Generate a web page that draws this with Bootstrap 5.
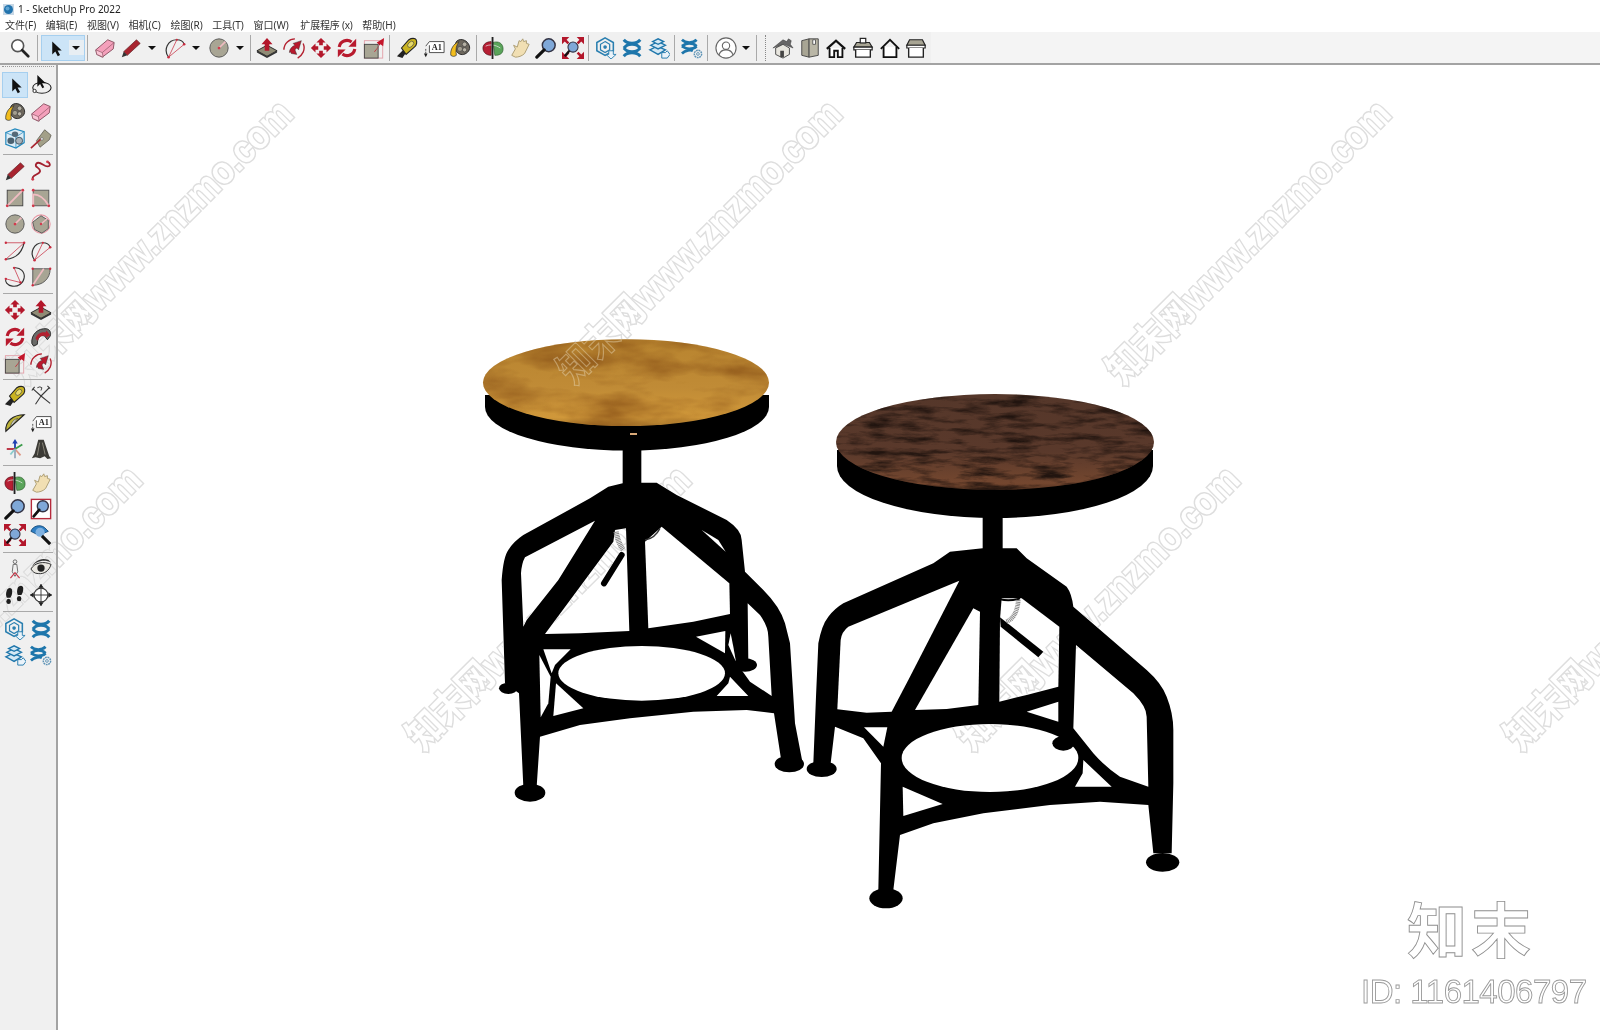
<!doctype html>
<html lang="zh">
<head>
<meta charset="utf-8">
<title>1 - SketchUp Pro 2022</title>
<link href="https://cdn.jsdelivr.net/npm/bootstrap@5.3.0/dist/css/bootstrap.min.css" rel="stylesheet">
<style>
html,body{height:1030px;overflow:hidden;background:#fff}
body{font-family:"Noto Sans","Noto Sans CJK SC",sans-serif;color:#222}
.su-app{height:1030px;position:relative}
.su-title{height:18px;font-size:10px;padding-left:3px;gap:4px;line-height:18px}
.su-logo{width:11px;height:11px;background:#c8d8e6}
.su-menu{height:14px;font-size:10px;line-height:14px;padding-left:5px;gap:9.6px;color:#333}
.su-menu span{white-space:nowrap}
.su-menu .su-m-wide{margin-left:2px;letter-spacing:-.2px}
.su-bar{height:33px;background:#f4f4f4;border-bottom:2px solid #a3a3a3}
.su-strip{height:31px;width:931px;background:#f0f0f0;padding-left:7px}
.su-i{width:26.7px;height:26px;flex:none;display:flex;align-items:center;justify-content:center}
.su-i svg{width:22px;height:22px;display:block}
.su-caret{width:14px;height:26px;flex:none;display:flex;align-items:center;justify-content:center}
.su-caret::after{content:"";border-style:solid;border-width:4.5px 4.5px 0;border-color:#111 transparent transparent}
.su-caret-gap{margin-right:3.3px}
.su-sel{width:44.3px;height:26px;background:#cce4f7;border:1px solid #a6cfef;flex:none;display:flex;align-items:center}
.su-sel .su-i{width:27px}
.su-sel .su-caret{width:15px;height:15px;background:#e8eef3}
.su-v{width:1px;height:26px;background:#a9a9a9;flex:none;margin:0 3.7px 0 1.4px}
.su-v-a{margin-left:3px;margin-right:3.3px}
.su-v-b{margin-left:1.2px;margin-right:4px}
.su-v-c{margin-left:3.3px;margin-right:3px}
.su-v-d{margin-left:2px;margin-right:3px}
.su-v-e{margin-left:1.6px;margin-right:4.7px}
.su-v-f{margin-left:2.2px;margin-right:8px}
.su-grip{width:1px;height:26px;flex:none;margin-right:4px;border-left:1px dotted #888}
.su-side{width:58px;flex:none;background:#f0f0f0;border-right:2px solid #a3a3a3;padding:1px 0 0 2px}
.su-grip-h{height:1px;width:52px;border-top:1px dotted #999;margin-bottom:5px}
.su-grid{display:grid;grid-template-columns:26px 26px;grid-auto-rows:26.4px}
.su-grid .su-i{width:26px;height:26.4px}
.su-grid .su-i.su-on{background:#cce4f7;outline:1px solid #a6cfef;outline-offset:-1px}
.su-h{height:7px;width:50px;margin-left:1px;display:flex;align-items:center}
.su-h::after{content:"";display:block;height:1px;width:100%;background:#a9a9a9}
.su-canvas{flex:1 1 auto;min-width:0;background:#fff}
.su-canvas svg{display:block}
.su-wm{position:absolute;left:0;top:0;pointer-events:none;mix-blend-mode:darken}
.su-wmt{font-family:"Liberation Sans","Noto Sans CJK SC",sans-serif;font-weight:700;font-size:39px;fill:#fff;stroke:#dedede;stroke-width:3px;paint-order:stroke}
.su-wmt-s{font-family:"Liberation Sans","Noto Sans CJK SC",sans-serif;font-weight:700;font-size:39px;fill:none;stroke:#e9d9b8;stroke-opacity:.45;stroke-width:1.2px}
.su-brand{font-family:"Noto Sans CJK SC",sans-serif;font-weight:700;font-size:60px;fill:#fff;stroke:#8f8f8f;stroke-width:.9px}
.su-id{font-family:"Liberation Sans",sans-serif;font-size:33px;fill:#fff;stroke:#9a9a9a;stroke-width:.9px}
</style>
</head>
<body>
<svg width="0" height="0" class="position-absolute">
<defs>
<symbol id="i-find" viewBox="0 0 24 24"><circle cx="9.5" cy="9.5" r="6.5" fill="#fff" stroke="#555" stroke-width="1.8"/><path d="M14.5 14.5 21 21" stroke="#222" stroke-width="3" stroke-linecap="round"/></symbol>
<symbol id="i-arrow" viewBox="0 0 24 24"><path d="M9 5v14l3.300-3.300 2.700 5.300 2.500-1.300-2.700-5h4.500z" fill="#111"/></symbol>
<symbol id="i-orbit" viewBox="0 0 24 24"><ellipse cx="13" cy="15" rx="10" ry="6" fill="none" stroke="#222" stroke-width="1.200"/><circle cx="5" cy="18.500" r="1.800" fill="#fff" stroke="#222"/><path d="M8 1v13l3-3 2.500 4.500 2-1-2.300-4.300h4z" fill="#111"/></symbol>
<symbol id="i-paint" viewBox="0 0 24 24"><path d="M9 4c5-3 11 0 13 5s-2 9-6 10-8-2-9-6 0-7 2-9z" fill="#6d675d" stroke="#222"/><circle cx="17" cy="8" r="2.500" fill="#b5b0a3" stroke="#333" stroke-width=".6"/><circle cx="12" cy="13" r="2.800" fill="#a39e8f" stroke="#333" stroke-width=".6"/><circle cx="17" cy="14" r="2.300" fill="#bab5a8" stroke="#333" stroke-width=".6"/><path d="M2 20c-1-6 3-13 9-15-3 4-4 8-3 15-2 1.500-4 1.500-6 0z" fill="#f2bd1d" stroke="#333" stroke-width=".8"/></symbol>
<symbol id="i-eraser" viewBox="0 0 24 24"><path d="M2 14 15 3l7 3-1 7L9 22l-6-3z" fill="#f4a0bb" stroke="#87505f"/><path d="M3 19l-1-5 7 3 1 5zM9 17 22 6" fill="#fbc6d6" stroke="#87505f" stroke-width=".7"/></symbol>
<symbol id="i-comp" viewBox="0 0 24 24"><path d="M2 6l10-4 10 3v12l-9 6-11-4z" fill="#dcecf6" stroke="#2489bd" stroke-width="1.300"/><path d="M2 6l11 5 9-6M13 11v12" fill="none" stroke="#2489bd" stroke-width=".8"/><ellipse cx="12" cy="8" rx="3.500" ry="3" fill="#566a78"/><ellipse cx="7.500" cy="15" rx="3.800" ry="3.500" fill="#4a6170"/><ellipse cx="16.500" cy="15" rx="3.800" ry="3.800" fill="#aab2b8" stroke="#40525e"/></symbol>
<symbol id="i-tag" viewBox="0 0 24 24"><path d="M7 15 16 3l7 6-2 5-10 8z" fill="#a3a088" stroke="#55544a" stroke-width=".8"/><path d="M1 23 12 13" stroke="#a8242f" stroke-width="1.800"/><circle cx="13" cy="13" r="1.500" fill="#eee" stroke="#555" stroke-width=".6"/></symbol>
<symbol id="i-pencil" viewBox="0 0 24 24"><path d="M4 16 18 3l4 4L8 20z" fill="#a8242f" stroke="#5a1a20" stroke-width=".7"/><path d="M4 16l-2 6 6-2z" fill="#333"/></symbol>
<symbol id="i-free" viewBox="0 0 24 24"><path d="M3 21c-2-5 8-5 8-9S4 8 7 4s8 3 12 3 3-4 0-5" fill="none" stroke="#a21f2d" stroke-width="2"/><circle cx="3" cy="21" r="1.500" fill="#d23a4c"/><circle cx="19" cy="2" r="1.500" fill="#d23a4c"/></symbol>
<symbol id="i-rect" viewBox="0 0 24 24"><rect x="3.500" y="3.500" width="17" height="17" fill="#a8a594" stroke="#444"/><path d="M3.500 20.500 20.500 3.500" stroke="#f0bcc2" stroke-width="2"/><circle cx="3.500" cy="20.500" r="1.500" fill="#d23a4c"/><circle cx="20.500" cy="3.500" r="1.500" fill="#d23a4c"/></symbol>
<symbol id="i-rrect" viewBox="0 0 24 24"><rect x="3.500" y="3.500" width="17" height="17" fill="#a8a594" stroke="#555"/><path d="M3.500 20.500V8q10 0 17 12.500" fill="none" stroke="#f0bcc2" stroke-width="2"/><g fill="#d23a4c"><circle cx="3.500" cy="3.500" r="1.500"/><circle cx="3.500" cy="20.500" r="1.500"/><circle cx="20.500" cy="20.500" r="1.500"/></g></symbol>
<symbol id="i-circle" viewBox="0 0 24 24"><circle cx="12" cy="12" r="10" fill="#a8a594" stroke="#555"/><path d="M12 12 19 5" stroke="#f0bcc2" stroke-width="1.800"/><circle cx="12" cy="12" r="1.500" fill="#d23a4c"/></symbol>
<symbol id="i-poly" viewBox="0 0 24 24"><circle cx="12" cy="12" r="10" fill="none" stroke="#e89aa5" stroke-width="1.200"/><path d="M12 3l8 5 0 9-7 5-8-4-2-8z" fill="#a8a594" stroke="#555"/><path d="M12 12 19 6" stroke="#f0bcc2" stroke-width="1.600"/><circle cx="12" cy="12" r="1.300" fill="#d23a4c"/></symbol>
<symbol id="i-arc1" viewBox="0 0 24 24"><path d="M2 21Q18 20 22 3" fill="none" stroke="#333" stroke-width="1.200"/><path d="M2 21 22 3M2 3h20" fill="none" stroke="#cf5363" stroke-width="1"/><g fill="#c92c40"><circle cx="2" cy="3" r="1.300"/><circle cx="22" cy="3" r="1.300"/><circle cx="2" cy="21" r="1.300"/></g></symbol>
<symbol id="i-arc2" viewBox="0 0 24 24"><path d="M5 22C-1 14 4 3 14 3c4 0 7 2 8 5" fill="none" stroke="#333" stroke-width="1.300"/><path d="M5 22 22 8M5 22 14 3" fill="none" stroke="#cf5363"/><g fill="#c92c40"><circle cx="5" cy="22" r="1.400"/><circle cx="22" cy="8" r="1.400"/><circle cx="14" cy="3" r="1.200"/></g></symbol>
<symbol id="i-arc3" viewBox="0 0 24 24"><path d="M11 2C18 1 23 7 22 13S15 23 9 22 1 17 2 14" fill="none" stroke="#333" stroke-width="1.200"/><path d="M11 2 18 18 2 14" fill="none" stroke="#cf5363"/><g fill="#c92c40"><circle cx="11" cy="2" r="1.300"/><circle cx="18" cy="18" r="1.300"/><circle cx="2" cy="14" r="1.300"/></g></symbol>
<symbol id="i-pie" viewBox="0 0 24 24"><path d="M3 3h19C22 14 14 21 3 21z" fill="#a8a594" stroke="#555"/><path d="M3 21 15 3" stroke="#f0bcc2" stroke-width="1.800"/><g fill="#c92c40"><circle cx="3" cy="3" r="1.300"/><circle cx="22" cy="3" r="1.300"/><circle cx="3" cy="21" r="1.300"/></g></symbol>
<symbol id="i-move" viewBox="0 0 24 24"><g fill="#b3172b"><path d="M12 1l5 5h-3v3h-4V6H7z"/><path d="M12 23l-5-5h3v-3h4v3h3z"/><path d="M1 12l5-5v3h3v4H6v3z"/><path d="M23 12l-5 5v-3h-3v-4h3V7z"/></g></symbol>
<symbol id="i-push" viewBox="0 0 24 24"><path d="M1 15 12 9l11 6-11 6z" fill="#8f8b75" stroke="#222"/><path d="M1 15v2l11 6 11-6v-2l-11 6z" fill="#333"/><path d="M12 1l6 7h-3.500v7h-5V8H6z" fill="#b3172b"/></symbol>
<symbol id="i-rotate" viewBox="0 0 24 24"><g fill="none" stroke="#b81a2e" stroke-width="3.400"><path d="M3.500 11A8.500 8.500 0 0 1 17 5.500"/><path d="M20.500 13A8.500 8.500 0 0 1 7 18.500"/></g><path d="M22 2v8.500h-8.500zM2 22v-8.500h8.500z" fill="#b81a2e"/></symbol>
<symbol id="i-follow" viewBox="0 0 24 24"><path d="M2 19C1 9 9 2 18 3c4 1 5 4 4 8l-3 4-3-4c-5-2-8 2-8 9l-4 2z" fill="#6a6a68" stroke="#1e1e1e"/><path d="M6 14c1-5 6-8 11-7l1-2 4 5-5 3 .5-2c-5-1-8 1-9 5z" fill="#b3202f"/></symbol>
<symbol id="i-scale" viewBox="0 0 24 24"><rect x="1.500" y="4" width="20" height="19" fill="none" stroke="#e3a0a9"/><rect x="1.500" y="8" width="15" height="15" fill="#a8a594" stroke="#444"/><path d="M12 16 18 9 15 6l8-5-1 9-3-2-6 8z" fill="#c4152a"/></symbol>
<symbol id="i-offset" viewBox="0 0 24 24"><g fill="none" stroke="#b3202f" stroke-width="1.500"><path d="M1 14C1 7 7 2 13 2"/><path d="M22 7c3 7-1 13-6 16"/></g><path d="M7 17c0-4 3-7 6-8l-2-2 9-3-3 10-2-2-2 2 2 5-6-1-1-2z" fill="#b81a2e" stroke="#2c2c2c" stroke-width=".5"/></symbol>
<symbol id="i-tape" viewBox="0 0 24 24"><path d="M1 21 8 14l3 3-4 6z" fill="#222"/><path d="M6 12 14 3c3-2 7-2 8 0s1 6-2 8l-9 8z" fill="#c9b320" stroke="#222" stroke-width="1.200"/><ellipse cx="16" cy="8" rx="2.500" ry="4" transform="rotate(45 16 8)" fill="#e7da6a" stroke="#333" stroke-width=".6"/></symbol>
<symbol id="i-tools" viewBox="0 0 24 24"><g stroke="#3a3a3a" stroke-width="1.200" fill="none"><path d="M3 4 12 12M22 20 12 12M12 12l-6 9M12 12l9-9"/><path d="M5 2l-3 4M19 1l3 3"/></g><path d="M8 3q3-2 5 0l-1 3" fill="none" stroke="#333"/></symbol>
<symbol id="i-proto" viewBox="0 0 24 24"><path d="M2 21C1 10 10 3 22 3z" fill="#bdb33a" stroke="#222" stroke-width="1.200"/><path d="M7 16C8 11 11 8 15 7z" fill="#eee" stroke="#333" stroke-width=".6"/></symbol>
<symbol id="i-text" viewBox="0 0 24 24"><path d="M3 13v7" stroke="#444" stroke-dasharray="2 1"/><path d="M1 18h4l-2 4z" fill="#222"/><path d="M3 10 7 5h16v12H7V9" fill="#fff" stroke="#444"/><text x="15" y="14" text-anchor="middle" font-family="Liberation Serif,serif" font-weight="700" font-size="9" fill="#222">A1</text></symbol>
<symbol id="i-axes" viewBox="0 0 24 24"><path d="M12 12V5" stroke="#1f3fb0" stroke-width="2"/><path d="M12 1l3 5H9z" fill="#1f3fb0"/><path d="M12 12l8-5" stroke="#3b9b4a" stroke-width="2"/><path d="M12 12H3" stroke="#b8283a" stroke-width="2"/><path d="M12 12l6 7" stroke="#d98" stroke-width="2"/><path d="M12 12l-5 6" stroke="#8cc" stroke-width="2"/><path d="M12 12v10" stroke="#9ab" stroke-width="2"/></symbol>
<symbol id="i-3d" viewBox="0 0 24 24"><path d="M9 2h6l6 18 2 2-4 1-3-3-5 2-5-1-4 1 3-5z" fill="#3c3b36"/><path d="M10.500 5 8 19M13.500 5l3 13" stroke="#8e8b7e"/></symbol>
<symbol id="i-orb" viewBox="0 0 24 24"><path d="M12 6c6-2 11 1 11 7s-5 7-9 7z" fill="#5aa45a" stroke="#2a5a2a" stroke-width=".7"/><path d="M1 12c0-4 4-7 9-7v15c-5 0-9-3-9-8z" fill="#b61f33" stroke="#4a1016" stroke-width=".7"/><path d="M4 10c4-2 10-2 16 2" fill="none" stroke="#e8e8e8" stroke-width=".8"/><path d="M11.500 0v24" stroke="#222" stroke-width="2"/></symbol>
<symbol id="i-hand" viewBox="0 0 24 24"><path d="M3 20 7 13 5 9l4 2 2-7 2 1 2-3 1 3 3-1 0 3 3 1-5 10c-3 3-7 4-10 4z" fill="#f1dfb3" stroke="#aa9a70"/></symbol>
<symbol id="i-zoom" viewBox="0 0 24 24"><circle cx="15" cy="9" r="7" fill="#7fa8d8" stroke="#334" stroke-width="1.600"/><path d="M10 14 2 22" stroke="#111" stroke-width="3.400" stroke-linecap="round"/></symbol>
<symbol id="i-zoomw" viewBox="0 0 24 24"><rect x="1.500" y="1.500" width="21" height="21" fill="#fff" stroke="#b62a3c" stroke-width="1.500"/><circle cx="14" cy="9" r="6" fill="#7fa8d8" stroke="#334" stroke-width="1.500"/><path d="M10 13 4 20" stroke="#111" stroke-width="3" stroke-linecap="round"/></symbol>
<symbol id="i-zoomx" viewBox="0 0 24 24"><g fill="#b3172b"><path d="M0 0h8L5 3l3 3-2 2-3-3-3 3z"/><path d="M24 0v8l-3-3-3 3-2-2 3-3-3-3z"/><path d="M24 24h-8l3-3-3-3 2-2 3 3 3-3z"/><path d="M0 24v-8l3 3 3-3 2 2-3 3 3 3z"/></g><circle cx="12" cy="11" r="5.500" fill="#7fa8d8" stroke="#334" stroke-width="1.200"/><path d="M8 15 3 21" stroke="#111" stroke-width="2.400"/></symbol>
<symbol id="i-prev" viewBox="0 0 24 24"><path d="M1 8c2-6 10-8 15-4l4 4-5 2-2-2c-3-1-5 0-6 3z" fill="#2f7fc4" stroke="#174d7c"/><circle cx="11" cy="9" r="5" fill="#7fb1e0"/><path d="M13 13l9 9" stroke="#111" stroke-width="3.400"/></symbol>
<symbol id="i-walk" viewBox="0 0 24 24"><circle cx="12" cy="4" r="2" fill="none" stroke="#666"/><path d="M10 7h4l1 8-3 5-3-5z" fill="none" stroke="#666"/><path d="M7 22l5-6 5 6" fill="none" stroke="#c8394a" stroke-width="1.300"/></symbol>
<symbol id="i-eye" viewBox="0 0 24 24"><path d="M1 12C5 5 15 3 23 7c-2 7-8 11-14 10-4 0-6-2-8-5z" fill="#eae8e2" stroke="#222"/><circle cx="12" cy="11" r="4" fill="#222"/><path d="M1 11C6 3 16 1 23 5l-3-3C12-1 5 3 1 11z" fill="#333"/></symbol>
<symbol id="i-feet" viewBox="0 0 24 24"><g fill="#1e1e1e"><path d="M3 7c2-4 6-3 6 1s-1 5-2 7H3c-1-3-1-5 0-8z"/><ellipse cx="5" cy="19" rx="2.500" ry="2.800"/><path d="M15 4c2-3 6-3 6 1s-1 5-2 7h-4c-1-3-1-5 0-8z"/><ellipse cx="16.500" cy="16" rx="2.500" ry="2.800"/></g></symbol>
<symbol id="i-pos" viewBox="0 0 24 24"><circle cx="12" cy="12" r="7.500" fill="#fff" stroke="#333" stroke-width="1.200"/><path d="M12 0v24M0 12h24" stroke="#333"/><path d="M12 0l3 4H9zM12 24l-3-4h6zM0 12l4-3v6zM24 12l-4 3V9z" fill="#222"/></symbol>
<symbol id="i-wh" viewBox="0 0 24 24"><path d="M11 1l9 5v9l-9 5-9-5V6z" fill="none" stroke="#2a7fb0" stroke-width="1.700"/><path d="M11 5l5 3v6l-5 3-5-3V8z" fill="none" stroke="#2a7fb0" stroke-width="1.300"/><circle cx="11" cy="11" r="2" fill="#2a7fb0"/><path d="M15 15h5v4h3l-5.500 5-5.500-5h3z" fill="#eaf3fa" stroke="#2a7fb0"/></symbol>
<symbol id="i-ext" viewBox="0 0 24 24"><g fill="none" stroke="#1e76ab" stroke-width="3.200"><path d="M3 3c4 5 14 5 18 0"/><path d="M3 21c4-5 14-5 18 0"/><path d="M3 12c3-3 4-4 9-4s6 1 9 4"/><path d="M3 12c3 3 4 4 9 4s6-1 9-4"/></g></symbol>
<symbol id="i-lay" viewBox="0 0 24 24"><g fill="#d4e8f4" stroke="#1e76ab" stroke-width="1.500"><path d="M2 14l8-4 9 4-8 5z"/><path d="M3 9l8-4 8 4-8 4z"/><path d="M5 5l6-3 6 3-6 3z"/></g><path d="M15 17h4l2-2 3 4-3 4h-6z" fill="#eaf3fa" stroke="#1e76ab"/></symbol>
<symbol id="i-extg" viewBox="0 0 24 24"><g fill="none" stroke="#1e76ab" stroke-width="3"><path d="M1 3c4 4 12 4 16 0"/><path d="M1 18c4-4 10-4 12-3"/><path d="M1 10c3-2 4-3 8-3s6 1 8 3"/><path d="M1 10c3 2 4 3 8 3s6-1 8-3"/></g><circle cx="18.500" cy="18.500" r="4" fill="#f0f0f0" stroke="#5d93b6" stroke-width="1.600" stroke-dasharray="2 .7"/><circle cx="18.500" cy="18.500" r="1.500" fill="none" stroke="#5d93b6"/></symbol>
<symbol id="i-user" viewBox="0 0 24 24"><circle cx="12" cy="12" r="11" fill="#fff" stroke="#666" stroke-width="1.200"/><circle cx="12" cy="9.500" r="4" fill="none" stroke="#666" stroke-width="1.200"/><path d="M4.500 19.500c1-4 4-5.500 7.500-5.500s6.500 1.500 7.500 5.500" fill="none" stroke="#666" stroke-width="1.200"/></symbol>
<symbol id="i-h1" viewBox="0 0 24 24"><path d="M1 12 12 3l4 2 2-3 3 2-1 4 3 4-10-4z" fill="#666" stroke="#333" stroke-width=".5"/><path d="M4 12v7l8 4 7-4v-7l-7-4z" fill="#e8e6df" stroke="#444"/><rect x="9" y="15" width="4" height="7" fill="#444"/></symbol>
<symbol id="i-h2" viewBox="0 0 24 24"><path d="M3 4l8-2v20l-8-2z" fill="#a8a594" stroke="#444"/><path d="M11 2h10v18l-10 2z" fill="#b9b6a6" stroke="#444"/><path d="M15 3h3v5h-3z" fill="#fff" stroke="#555"/></symbol>
<symbol id="i-h3" viewBox="0 0 24 24"><path d="M2 13 12 4l10 9" fill="none" stroke="#111" stroke-width="2.400"/><path d="M5 12v10h5v-7h4v7h5V12" fill="#fff" stroke="#111" stroke-width="2"/></symbol>
<symbol id="i-h4" viewBox="0 0 24 24"><path d="M5 6h14l3 5H2z" fill="#a8a594" stroke="#222" stroke-width="1.300"/><rect x="9" y="1.500" width="6" height="5" fill="#fff" stroke="#222" stroke-width="1.300"/><path d="M2 11h20v3H2z" fill="#fff" stroke="#222" stroke-width="1.300"/><path d="M4 14v8h16v-8" fill="#fff" stroke="#222" stroke-width="1.500"/></symbol>
<symbol id="i-h5" viewBox="0 0 24 24"><path d="M2 13 12 3l10 10" fill="none" stroke="#111" stroke-width="2"/><path d="M5 11v11h14V11" fill="#fff" stroke="#111" stroke-width="2"/></symbol>
<symbol id="i-h6" viewBox="0 0 24 24"><path d="M5 3h14l3 6H2z" fill="#a8a594" stroke="#222" stroke-width="1.300"/><path d="M2 9h20v3H2z" fill="#fff" stroke="#222" stroke-width="1.300"/><path d="M4 12v10h16V12" fill="#fff" stroke="#222" stroke-width="1.500"/></symbol>
</defs>
</svg>

<div class="su-app d-flex flex-column">
  <div class="su-title d-flex align-items-center">
    <svg class="su-logo" viewBox="0 0 11 11"><circle cx="5.500" cy="5.500" r="4.500" fill="#2273ad"/><circle cx="4.500" cy="4.500" r="2" fill="#5ea3d2"/></svg>
    <span>1 - SketchUp Pro 2022</span>
  </div>
  <div class="su-menu d-flex">
    <span>文件(F)</span><span>编辑(E)</span><span>视图(V)</span><span>相机(C)</span><span>绘图(R)</span><span>工具(T)</span><span>窗口(W)</span><span class="su-m-wide">扩展程序 (x)</span><span>帮助(H)</span>
  </div>
  <div class="su-bar">
    <div class="su-strip d-flex align-items-center">
      <div class="su-i"><svg><use href="#i-find"/></svg></div>
      <div class="su-v su-v-a"></div>
      <div class="su-sel"><div class="su-i"><svg><use href="#i-arrow"/></svg></div><div class="su-caret"></div></div>
      <div class="su-v"></div>
      <div class="su-i"><svg><use href="#i-eraser"/></svg></div>
      <div class="su-i"><svg><use href="#i-pencil"/></svg></div><div class="su-caret su-caret-gap"></div>
      <div class="su-i"><svg><use href="#i-arc2"/></svg></div><div class="su-caret su-caret-gap"></div>
      <div class="su-i"><svg><use href="#i-circle"/></svg></div><div class="su-caret"></div>
      <div class="su-v su-v-c"></div>
      <div class="su-i"><svg><use href="#i-push"/></svg></div>
      <div class="su-i"><svg><use href="#i-offset"/></svg></div>
      <div class="su-i"><svg><use href="#i-move"/></svg></div>
      <div class="su-i"><svg><use href="#i-rotate"/></svg></div>
      <div class="su-i"><svg><use href="#i-scale"/></svg></div>
      <div class="su-v"></div>
      <div class="su-i"><svg><use href="#i-tape"/></svg></div>
      <div class="su-i"><svg><use href="#i-text"/></svg></div>
      <div class="su-i"><svg><use href="#i-paint"/></svg></div>
      <div class="su-v su-v-d"></div>
      <div class="su-i"><svg><use href="#i-orb"/></svg></div>
      <div class="su-i"><svg><use href="#i-hand"/></svg></div>
      <div class="su-i"><svg><use href="#i-zoom"/></svg></div>
      <div class="su-i"><svg><use href="#i-zoomx"/></svg></div>
      <div class="su-v"></div>
      <div class="su-i"><svg><use href="#i-wh"/></svg></div>
      <div class="su-i"><svg><use href="#i-ext"/></svg></div>
      <div class="su-i"><svg><use href="#i-lay"/></svg></div>
      <div class="su-v su-v-b"></div>
      <div class="su-i"><svg><use href="#i-extg"/></svg></div>
      <div class="su-v su-v-e"></div>
      <div class="su-i"><svg><use href="#i-user"/></svg></div><div class="su-caret"></div>
      <div class="su-v su-v-f"></div>
      <div class="su-grip"></div>
      <div class="su-i"><svg><use href="#i-h1"/></svg></div>
      <div class="su-i"><svg><use href="#i-h2"/></svg></div>
      <div class="su-i"><svg><use href="#i-h3"/></svg></div>
      <div class="su-i"><svg><use href="#i-h4"/></svg></div>
      <div class="su-i"><svg><use href="#i-h5"/></svg></div>
      <div class="su-i"><svg><use href="#i-h6"/></svg></div>
    </div>
  </div>
  <div class="d-flex flex-grow-1">
    <div class="su-side">
      <div class="su-grip-h"></div>
      <div class="su-grid">
        <div class="su-i su-on"><svg><use href="#i-arrow"/></svg></div><div class="su-i"><svg><use href="#i-orbit"/></svg></div>
        <div class="su-i"><svg><use href="#i-paint"/></svg></div><div class="su-i"><svg><use href="#i-eraser"/></svg></div>
        <div class="su-i"><svg><use href="#i-comp"/></svg></div><div class="su-i"><svg><use href="#i-tag"/></svg></div>
      </div>
      <div class="su-h"></div>
      <div class="su-grid">
        <div class="su-i"><svg><use href="#i-pencil"/></svg></div><div class="su-i"><svg><use href="#i-free"/></svg></div>
        <div class="su-i"><svg><use href="#i-rect"/></svg></div><div class="su-i"><svg><use href="#i-rrect"/></svg></div>
        <div class="su-i"><svg><use href="#i-circle"/></svg></div><div class="su-i"><svg><use href="#i-poly"/></svg></div>
        <div class="su-i"><svg><use href="#i-arc1"/></svg></div><div class="su-i"><svg><use href="#i-arc2"/></svg></div>
        <div class="su-i"><svg><use href="#i-arc3"/></svg></div><div class="su-i"><svg><use href="#i-pie"/></svg></div>
      </div>
      <div class="su-h"></div>
      <div class="su-grid">
        <div class="su-i"><svg><use href="#i-move"/></svg></div><div class="su-i"><svg><use href="#i-push"/></svg></div>
        <div class="su-i"><svg><use href="#i-rotate"/></svg></div><div class="su-i"><svg><use href="#i-follow"/></svg></div>
        <div class="su-i"><svg><use href="#i-scale"/></svg></div><div class="su-i"><svg><use href="#i-offset"/></svg></div>
      </div>
      <div class="su-h"></div>
      <div class="su-grid">
        <div class="su-i"><svg><use href="#i-tape"/></svg></div><div class="su-i"><svg><use href="#i-tools"/></svg></div>
        <div class="su-i"><svg><use href="#i-proto"/></svg></div><div class="su-i"><svg><use href="#i-text"/></svg></div>
        <div class="su-i"><svg><use href="#i-axes"/></svg></div><div class="su-i"><svg><use href="#i-3d"/></svg></div>
      </div>
      <div class="su-h"></div>
      <div class="su-grid">
        <div class="su-i"><svg><use href="#i-orb"/></svg></div><div class="su-i"><svg><use href="#i-hand"/></svg></div>
        <div class="su-i"><svg><use href="#i-zoom"/></svg></div><div class="su-i"><svg><use href="#i-zoomw"/></svg></div>
        <div class="su-i"><svg><use href="#i-zoomx"/></svg></div><div class="su-i"><svg><use href="#i-prev"/></svg></div>
      </div>
      <div class="su-h"></div>
      <div class="su-grid">
        <div class="su-i"><svg><use href="#i-walk"/></svg></div><div class="su-i"><svg><use href="#i-eye"/></svg></div>
        <div class="su-i"><svg><use href="#i-feet"/></svg></div><div class="su-i"><svg><use href="#i-pos"/></svg></div>
      </div>
      <div class="su-h"></div>
      <div class="su-grid">
        <div class="su-i"><svg><use href="#i-wh"/></svg></div><div class="su-i"><svg><use href="#i-ext"/></svg></div>
        <div class="su-i"><svg><use href="#i-lay"/></svg></div><div class="su-i"><svg><use href="#i-extg"/></svg></div>
      </div>
    </div>
    <div class="su-canvas">
      <svg width="1542" height="965" viewBox="58 65 1542 965">
        <defs>
          <linearGradient id="seatA" x1="0" y1="0" x2="0" y2="1"><stop offset="0" stop-color="#b8842f"/><stop offset=".55" stop-color="#c08b36"/><stop offset=".9" stop-color="#d0983a"/><stop offset="1" stop-color="#a9772c"/></linearGradient>
          <linearGradient id="seatB" x1="0" y1="0" x2="0" y2="1"><stop offset="0" stop-color="#55372a"/><stop offset=".6" stop-color="#5a392b"/><stop offset=".93" stop-color="#74472f"/><stop offset="1" stop-color="#50301f"/></linearGradient>
          <filter id="woodA" x="0" y="0" width="1" height="1" color-interpolation-filters="sRGB"><feTurbulence type="fractalNoise" baseFrequency=".014 .04" numOctaves="4" seed="5"/><feColorMatrix type="matrix" values="0 0 0 0 .50  0 0 0 0 .28  0 0 0 0 .07  1.400 0 0 0 -.55"/><feComposite in2="SourceAlpha" operator="in"/></filter>
          <filter id="woodB" x="0" y="0" width="1" height="1" color-interpolation-filters="sRGB"><feTurbulence type="fractalNoise" baseFrequency=".03 .14" numOctaves="5" seed="11"/><feColorMatrix type="matrix" values="0 0 0 0 .13  0 0 0 0 .08  0 0 0 0 .06  2.400 0 0 0 -1"/><feComposite in2="SourceAlpha" operator="in"/></filter>
          <clipPath id="clipA"><ellipse cx="626" cy="382.600" rx="143" ry="43.400"/></clipPath>
        </defs>

        <!-- stool 1 -->
        <g fill="#000"><ellipse cx="627" cy="407" rx="142" ry="43.500"/><rect x="485" y="395" width="284" height="12"/></g>
        <g transform="translate(480 470) scale(.33333)">
          <path fill="#000" d="M428-60H484V38H530L590 75 740 150Q785 180 785 210L795 305 850 360Q900 410 915 460L930 520 945 760 968 880H905L882 730 800 720 640 725 450 745 300 765 180 800 170 950H130L117 670 75 640 65 330Q70 260 85 240 100 215 130 195L330 85 385 50 428 40Z"/>
          <g fill="#fff">
            <path d="M345 152 135 262Q125 280 123 310L130 470 140 450 235 330Z"/>
            <path d="M438 175 448 483 300 490 195 492 400 215 405 180Z"/>
            <path d="M545 170 748 340 750 432 640 455 505 475 495 215Z"/>
            <path d="M665 180 715 210 737 245Z"/>
            <path d="M803 400 840 435Q865 470 865 500L875 678 810 635 770 580 805 575Z"/>
            <path d="M648 500 736 483 735 550Z"/>
            <path d="M752 490 745 525 768 575 760 530Z"/>
            <ellipse cx="485" cy="610" rx="250" ry="82"/>
            <path d="M750 620 805 678H710L745 640Z"/>
            <path d="M190 538H272L225 585 215 610Z"/>
            <path d="M178 555 212 620 205 700 182 742Z"/>
            <path d="M228 640 310 715 220 738Z"/>
          </g>
          <g fill="#000">
            <ellipse cx="150" cy="968" rx="46" ry="27"/><ellipse cx="928" cy="882" rx="44" ry="25"/>
            <ellipse cx="85" cy="655" rx="28" ry="17"/><ellipse cx="795" cy="585" rx="36" ry="20"/>
          </g>
          <path d="M425 255 372 340" stroke="#000" stroke-width="18" stroke-linecap="round" fill="none"/>
          <path d="M495 210Q525 205 540 175" stroke="#333" stroke-width="4" fill="none"/>
          <path d="M408 185Q415 220 430 240" stroke="#8a8a8a" stroke-width="16" stroke-dasharray="3 2" fill="none"/>
        </g>
        <ellipse cx="626" cy="382.600" rx="143" ry="43.400" fill="url(#seatA)"/>
        <ellipse cx="626" cy="382.600" rx="143" ry="43.400" fill="#000" filter="url(#woodA)"/>
        <g clip-path="url(#clipA)"><text class="su-wmt-s" transform="translate(574 386) rotate(-45)" textLength="382" lengthAdjust="spacingAndGlyphs">知末网www.znzmo.com</text></g>
        <rect x="630" y="433" width="7" height="2" fill="#d8a878"/>

        <!-- stool 2 -->
        <g fill="#000"><ellipse cx="995" cy="466" rx="158" ry="52"/><rect x="837" y="450" width="316" height="16"/></g>
        <g transform="translate(800 530) scale(.33333)">
          <path fill="#000" d="M548-60H608V55H650L680 85 800 170Q815 190 820 230L1040 420Q1085 460 1100 500 1120 550 1120 600V760L1115 970H1060L1045 825 900 815 750 825 550 850 400 880 300 915 280 1080H235L243 700 190 625 105 590 92 700H40L48 500 55 340Q65 285 85 260 105 235 130 220L400 100 450 65 548 55Z"/>
          <g fill="#fff">
            <path d="M478 152 145 290Q125 305 122 330L112 538 200 548 275 545 330 440Z"/>
            <path d="M520 235 345 540 440 537 535 525 540 245Z"/>
            <path d="M605 205H665L778 290 775 470 680 495 598 515 600 268Z"/>
            <path d="M828 345 1000 490Q1040 530 1040 560L1045 770 960 740Q915 710 880 670L820 595Z"/>
            <path d="M775 515V575L680 545Z"/>
            <ellipse cx="570" cy="684" rx="265" ry="102"/>
            <path d="M850 690 935 770H825L848 730Z"/>
            <path d="M192 592H262L250 650Z"/>
            <path d="M308 770 428 822 310 858Z"/>
          </g>
          <g fill="#000">
            <ellipse cx="65" cy="717" rx="45" ry="24"/><ellipse cx="258" cy="1105" rx="50" ry="30"/>
            <ellipse cx="1088" cy="997" rx="50" ry="28"/><ellipse cx="790" cy="640" rx="33" ry="22"/>
            <path d="M600 262 730 365 715 382 602 290Z"/>
          </g>
          <path d="M515 228 600 268" stroke="#000" stroke-width="5" fill="none"/>
          <path d="M600 208Q630 215 660 205" stroke="#000" stroke-width="6" fill="none"/>
          <path d="M655 210Q650 265 618 275" stroke="#8a8a8a" stroke-width="14" stroke-dasharray="3 2" fill="none"/>
        </g>
        <ellipse cx="995" cy="442" rx="159" ry="48" fill="url(#seatB)"/>
        <ellipse cx="995" cy="442" rx="159" ry="48" fill="#000" filter="url(#woodB)"/>
      </svg>
    </div>
  </div>
  <svg class="su-wm" width="1600" height="1030" viewBox="0 0 1600 1030">
    <text class="su-wmt" transform="translate(25 386) rotate(-45)" textLength="382" lengthAdjust="spacingAndGlyphs">知末网www.znzmo.com</text>
    <text class="su-wmt" transform="translate(574 386) rotate(-45)" textLength="382" lengthAdjust="spacingAndGlyphs">知末网www.znzmo.com</text>
    <text class="su-wmt" transform="translate(1123 386) rotate(-45)" textLength="382" lengthAdjust="spacingAndGlyphs">知末网www.znzmo.com</text>
    <text class="su-wmt" transform="translate(-126 752) rotate(-45)" textLength="382" lengthAdjust="spacingAndGlyphs">知末网www.znzmo.com</text>
    <text class="su-wmt" transform="translate(423 752) rotate(-45)" textLength="382" lengthAdjust="spacingAndGlyphs">知末网www.znzmo.com</text>
    <text class="su-wmt" transform="translate(972 752) rotate(-45)" textLength="382" lengthAdjust="spacingAndGlyphs">知末网www.znzmo.com</text>
    <text class="su-wmt" transform="translate(1521 752) rotate(-45)" textLength="382" lengthAdjust="spacingAndGlyphs">知末网www.znzmo.com</text>
    <text class="su-brand" x="1407" y="953" textLength="124">知末</text>
    <text class="su-id" x="1361" y="1003" textLength="226">ID: 1161406797</text>
  </svg>
</div>
<script src="https://cdn.jsdelivr.net/npm/bootstrap@5.3.0/dist/js/bootstrap.bundle.min.js"></script>
</body>
</html>
